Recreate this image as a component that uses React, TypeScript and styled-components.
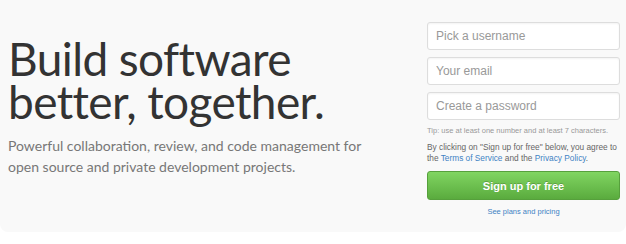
import styled, { createGlobalStyle } from 'styled-components';

const GlobalStyle = createGlobalStyle`
  body {
    margin: 0;
    background: #fff;
    font-family: "Liberation Sans", Arial, sans-serif;
  }
`;

const Hero = styled.div`
  display: flex;
  justify-content: space-between;
  height: 232px;
  background: #f9f9f9;
  border-radius: 0 0 8px 8px;
`;

const Intro = styled.div`
  padding: 37px 0 0 8px;
`;

const Heading = styled.h1`
  margin: 0;
  font-family: Lato, "Open Sans", sans-serif;
  font-weight: 400;
  font-size: 46px;
  line-height: 43px;
  letter-spacing: -0.6px;
  color: #333;
`;

const Lead = styled.p`
  margin: 12px 0 0;
  font-family: Lato, "Open Sans", sans-serif;
  font-size: 14px;
  line-height: 21px;
  color: #777;
`;

const SignupForm = styled.form`
  display: flex;
  flex-direction: column;
  width: 193px;
  margin-right: 6px;
  padding-top: 22px;
`;

const Field = styled.input`
  box-sizing: border-box;
  height: 28px;
  margin-bottom: 7px;
  padding: 0 8px;
  border: 1px solid #ddd;
  border-radius: 3px;
  background: #fff;
  box-shadow: inset 0 1px 2px rgba(0, 0, 0, 0.05);
  font-family: inherit;
  font-size: 12px;
  color: #333;
  outline: none;

  &::placeholder {
    color: #999;
  }
`;

const Tip = styled.p`
  margin: -2px 0 6px;
  font-size: 7.5px;
  line-height: 11px;
  color: #999;
`;

const Terms = styled.p`
  margin: 0 0 7px;
  font-size: 8.3px;
  line-height: 11px;
  color: #666;
  white-space: nowrap;
`;

const Link = styled.a`
  color: #4183c4;
  text-decoration: none;
`;

const SubmitButton = styled.button`
  height: 29px;
  border: 1px solid #56a03c;
  border-radius: 3px;
  background: linear-gradient(#80d561, #5aab3e);
  color: #fff;
  font-family: inherit;
  font-size: 11px;
  font-weight: 700;
  text-shadow: 0 -1px 0 rgba(0, 0, 0, 0.2);
  cursor: pointer;
`;

const PlansLink = styled(Link)`
  display: block;
  margin-top: 6px;
  text-align: center;
  font-size: 7.5px;
  line-height: 11px;
`;

export default function App() {
  return (
    <>
      <GlobalStyle />
      <Hero>
        <Intro>
          <Heading>
            Build software
            <br />
            better, together.
          </Heading>
          <Lead>
            Powerful collaboration, review, and code management for
            <br />
            open source and private development projects.
          </Lead>
        </Intro>
        <SignupForm onSubmit={(e) => e.preventDefault()}>
          <Field type="text" placeholder="Pick a username" />
          <Field type="email" placeholder="Your email" />
          <Field type="password" placeholder="Create a password" />
          <Tip>Tip: use at least one number and at least 7 characters.</Tip>
          <Terms>
            By clicking on "Sign up for free" below, you agree to
            <br />
            the <Link href="#">Terms of Service</Link> and the{' '}
            <Link href="#">Privacy Policy</Link>.
          </Terms>
          <SubmitButton type="submit">Sign up for free</SubmitButton>
          <PlansLink href="#">See plans and pricing</PlansLink>
        </SignupForm>
      </Hero>
    </>
  );
}
